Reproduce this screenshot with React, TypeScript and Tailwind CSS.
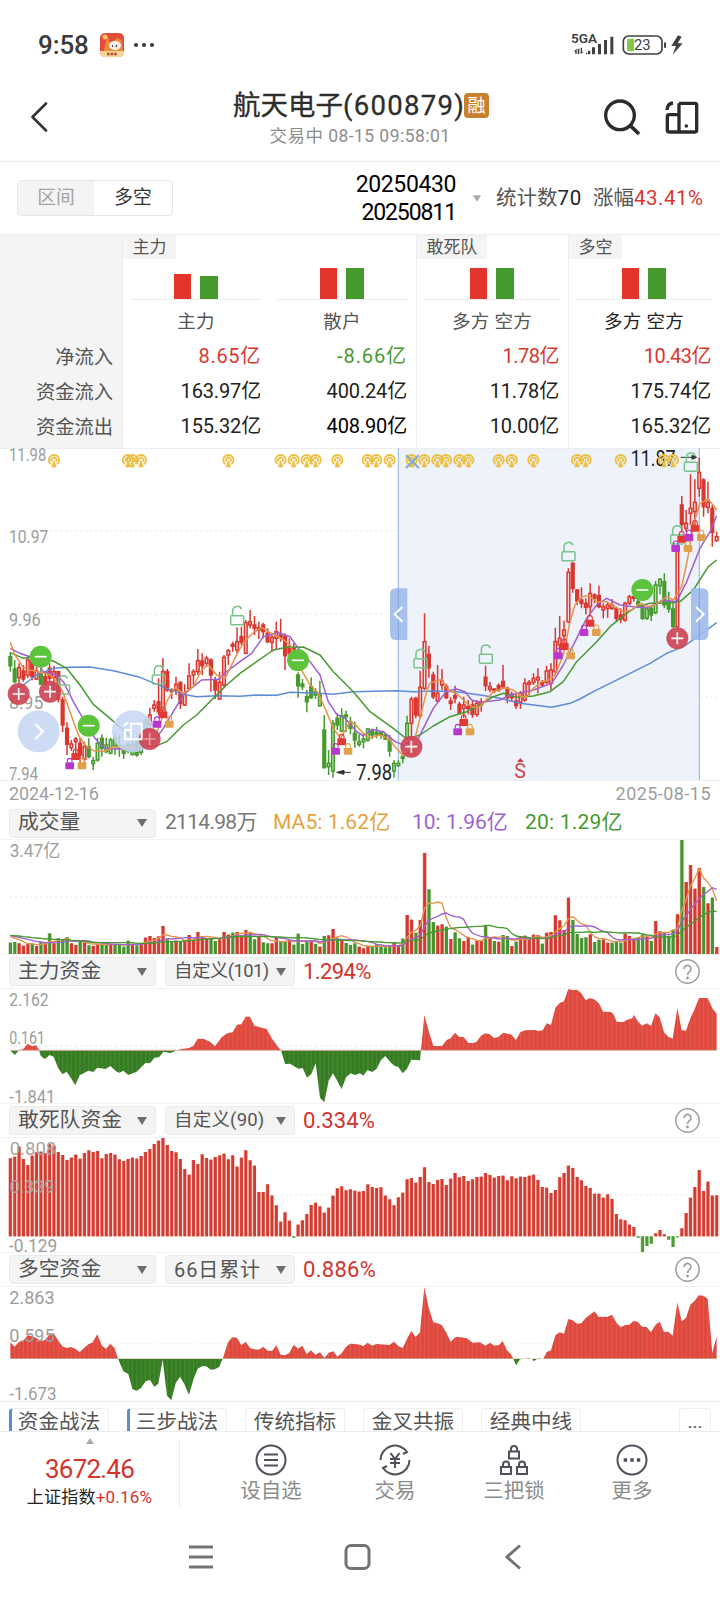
import type { ReactNode } from "react";

const RED = "#d9372f";
const GREEN = "#479a2f";
const ORANGE = "#e8924a";
const PURPLE = "#a05fd0";
const BLUE = "#5f8bd4";

// Chart space: 3 units per css pixel, one bar every 13.08 units.
const barX = (i: number) => 31 + 13.08 * i;

// [kind, high, bodyTop, bodyBottom, low] - upper case is a hollow body
const CANDLES = `g622,635,662,680 g645,672,710,715 R655,668,698,715 r660,678,702,710 R632,645,690,700 r635,645,695,706 R665,678,702,705 g668,685,718,720 r680,695,715,720 r655,670,700,710
R662,680,698,745 r678,680,762,772 r755,765,840,862 r832,850,898,930 R885,897,908,918 R876,882,890,935 r878,895,930,970 R890,905,942,958 g880,905,935,940 G935,947,956,975
G878,895,945,950 g868,880,910,935 G878,900,920,925 G878,885,925,928 G865,880,903,930 g870,900,910,935 g900,915,925,942 G890,900,918,925 G888,897,928,932 g885,895,930,935
G885,895,922,930 G822,828,895,900 R788,810,838,848 R765,780,790,800 r700,770,800,810 R640,680,795,810 r672,680,735,740 r730,735,740,762 R695,718,735,750 r710,712,775,792
R718,748,780,783 R655,693,730,735 R672,680,690,720 R612,647,680,690 r625,648,662,690 R632,640,655,665 r640,645,690,740 r695,705,735,762 R680,712,762,764 R630,637,720,730
R612,617,630,660 r590,598,604,620 R547,590,615,625 r545,575,592,600 R525,533,625,628 R495,530,540,550 r513,540,550,570 r530,548,555,582 r533,540,560,580 r550,565,590,595
R570,577,592,620 R530,560,580,612 r521,570,578,590 r565,575,632,675 r580,605,625,640 r595,610,640,660 g682,690,722,758 g702,717,725,735 g735,755,770,802 g697,725,758,762
g730,740,750,762 G708,750,782,785 g810,855,968,970 G915,955,965,990 G825,835,978,998 g805,820,840,855 G790,812,858,862 g797,810,815,862 g815,830,850,868 g830,865,885,908
G868,890,898,905 G865,882,890,910 G850,852,885,890 g852,858,870,882 g845,862,868,880 g858,862,870,882 g865,870,882,885 g870,885,918,935 G945,955,978,998 G945,955,962,965
g925,935,940,955 G812,835,880,885 R755,763,835,925 r755,760,810,820 R677,727,812,820 R505,590,730,735 r603,628,668,698 r680,690,755,762 R660,745,768,770 R672,708,720,735
r717,725,758,762 r757,768,775,795 r722,752,760,775 r770,778,805,808 R755,780,790,820 r765,785,790,808 r768,780,808,818 R765,775,808,815 R760,770,780,800 r662,697,722,738
R710,725,733,742 r730,732,738,745 r715,722,735,740 r660,710,725,730 r725,730,758,775 r740,748,758,770 r740,768,782,792 R738,745,772,792 R700,715,765,770 R705,712,718,750
R685,700,712,720 R670,697,705,745 r705,712,720,725 R662,678,712,718 R655,675,715,735 R548,590,680,685 R513,580,600,625 R527,555,572,600 R370,382,530,535 r352,355,430,443
r432,435,468,480 r427,465,475,490 r460,475,487,508 R415,445,485,510 r445,450,460,475 r422,452,485,490 R475,485,495,520 R470,480,490,518 R462,480,490,495 r485,490,520,530
r490,510,522,535 R470,475,525,530 R450,455,475,480 r450,455,460,470 g455,470,478,490 g475,485,520,525 G485,492,520,525 g480,490,510,528 G408,420,503,508 G400,403,422,448
g385,410,480,490 g440,470,492,503 g465,492,545,548 R300,310,545,550 r153,180,238,260 R195,235,250,260 R88,190,205,240 R103,172,200,240 R38,82,130,155 r100,105,185,215
R110,172,187,205 r180,190,262,305 R260,275,287,290`
  .split(/\s+/)
  .map((s) => ({ kind: s[0], v: s.slice(1).split(",").map(Number) }));

const VOLUMES = `428g 426g 430r 437r 432r 432g 438r 426g 430r 400g 430r 415g 420g 411g 430r 435r 425g 428r 436g 438r 433r 432g 432g 432r 435g 435g 440g 422g 433r 436g
432r 413r 408r 414r 409r 378r 418g 426g 422r 426g 420r 405r 420r 396r 410r 415r 415g 423g 418r 396r 404r 398g 396r 406r 390r 396g 418g 411r 427g 430g
430r 413r 423g 425g 421r 434g 401g 432g 425g 425r 432g 440r 408g 406r 387r 415g 420r 429g 435g 430g 440r 445r 438r 440g 433g 438g 442g 440g 427r 437r
416g 345r 359r 398g 360r 159r 268g 366g 377r 373r 380g 417r 397g 415g 423r 412r 434g 422r 422r 378g 412r 423g 425r 405g 408g 438r 425g 408r 407r 415r
404r 405r 431g 398r 396r 346r 361r 390r 293r 360g 402g 414g 412g 403r 426g 419g 418r 428r 428g 425g 428g 401r 408r 415r 412g 404g 408r 423g 363r 394r
397g 407g 389g 343r 120g 246r 195r 266r 204r 261g 310r 293g 441r`
  .split(/\s+/)
  .map((s) => ({ top: parseInt(s, 10), up: s.endsWith("r") }));

const DARE = [
  160, 155, 125, 162, 180, 152, 142, 140, 145, 118, 122, 141, 150, 165, 158, 149, 161, 144, 136, 141, 138, 160, 147, 144, 149, 163, 168,
  162, 158, 161, 153, 141, 132, 117, 107, 99, 120, 138, 142, 162, 192, 209, 165, 177, 148, 159, 164, 156, 151, 146, 163, 151, 185, 158,
  136, 166, 182, 261, 261, 238, 272, 301, 350, 322, 347, 398, 359, 346, 327, 300, 293, 304, 323, 308, 272, 250, 244, 256, 253, 257, 260,
  258, 238, 246, 249, 247, 272, 283, 301, 277, 263, 223, 219, 233, 216, 187, 231, 237, 225, 222, 240, 221, 204, 217, 213, 228, 223, 216,
  215, 204, 210, 218, 213, 212, 226, 214, 220, 215, 216, 212, 209, 225, 246, 248, 264, 255, 217, 204, 182, 189, 216, 226, 243, 249, 266,
  266, 278, 268, 282, 327, 343, 346, 359, 366, 398, 441, 423, 416, 385, 375, 388, 404, 426, 396, 370, 324, 278, 246, 195, 258, 230, 272,
  271,
];

const MAIN_FUND =
  "31,751 44,765 57,751 70,747 83,731 96,739 109,736 117,751 122,767 135,778 148,765 161,770 174,803 187,823 200,815 213,835 226,856 239,826 265,812 280,816 292,803 317,807 331,798 350,815 358,818 370,812 385,825 410,815 437,788 450,790 463,773 477,772 490,755 510,759 520,756 530,751 545,747 567,744 580,738 593,716 610,716 630,725 645,739 665,712 683,699 698,697 711,674 724,673 737,650 750,650 763,677 780,682 800,687 816,716 835,742 843,751 855,792 870,791 895,806 908,804 921,833 934,822 947,790 960,893 973,907 986,842 999,820 1012,843 1025,867 1038,832 1052,820 1065,825 1080,820 1090,827 1102,810 1117,816 1130,806 1143,780 1156,768 1170,785 1183,797 1195,801 1208,820 1221,806 1234,779 1260,781 1263,751 1273,645 1286,692 1300,738 1326,738 1340,720 1352,715 1365,698 1378,711 1391,711 1405,729 1420,729 1430,725 1443,707 1456,700 1469,703 1482,714 1495,711 1510,698 1535,704 1548,720 1561,697 1574,691 1605,690 1615,693 1628,691 1640,670 1653,675 1666,624 1679,609 1692,604 1705,567 1718,571 1731,569 1744,580 1757,601 1770,594 1785,599 1798,612 1809,635 1833,636 1840,642 1850,665 1870,666 1882,659 1897,655 1901,644 1913,663 1926,677 1940,670 1953,678 1966,640 1979,652 1992,697 2005,710 2018,716 2032,624 2045,690 2058,692 2071,655 2084,627 2097,594 2123,594 2137,625 2150,641";

const LONG_SHORT =
  "31,713 44,726 57,711 70,708 83,692 96,695 109,700 122,709 135,706 148,690 161,686 174,707 187,725 200,730 213,727 226,732 239,743 252,730 265,719 278,713 292,689 305,722 318,733 331,717 344,731 354,762 370,800 385,808 397,853 410,858 423,850 437,830 450,826 463,846 475,837 488,765 501,873 514,887 527,836 540,816 553,838 567,870 580,825 593,792 606,785 619,785 632,795 645,794 658,786 668,762 684,713 697,698 711,699 724,722 737,711 750,730 763,734 776,735 790,726 803,738 816,739 829,722 842,750 855,752 868,745 881,720 894,732 907,723 920,748 933,737 946,750 960,743 973,760 986,744 1000,740 1012,756 1025,746 1038,726 1051,717 1064,718 1080,720 1090,725 1103,714 1116,723 1129,718 1168,721 1182,711 1195,724 1208,730 1221,702 1234,679 1247,697 1260,683 1273,547 1286,609 1300,653 1313,656 1326,662 1339,684 1352,711 1365,698 1378,697 1400,701 1418,714 1440,713 1456,723 1470,714 1483,723 1497,721 1508,709 1521,737 1534,750 1540,762 1548,782 1560,764 1575,762 1585,760 1597,763 1600,770 1610,764 1615,760 1630,763 1640,742 1653,737 1666,692 1679,683 1692,687 1705,643 1718,647 1731,657 1744,656 1757,640 1770,630 1784,620 1796,637 1823,636 1836,630 1850,655 1862,668 1875,661 1888,660 1900,649 1913,651 1926,666 1940,667 1953,683 1966,661 1979,651 1992,682 2005,681 2018,693 2032,593 2045,650 2058,640 2071,600 2084,588 2097,572 2110,573 2123,582 2137,745 2150,695";

const MA_LINES = [
  [BLUE, "31,742 70,720 110,690 160,670 210,667 270,666 340,677 420,697 500,730 550,748 590,755 650,752 720,754 770,750 830,751 870,742 960,745 1000,748 1060,740 1190,737 1240,740 1300,738 1370,740 1440,750 1500,760 1560,775 1655,787 1710,775 1740,762 1780,740 1860,700 1950,655 2000,625 2050,605 2100,570 2150,533"],
  [GREEN, "31,623 70,640 100,636 160,648 200,670 240,720 280,778 330,820 370,855 410,890 440,903 470,902 500,890 550,840 590,810 640,760 680,720 720,685 770,650 820,615 860,607 910,606 960,630 1000,680 1060,740 1110,800 1180,850 1220,882 1260,870 1300,843 1350,815 1400,800 1440,780 1480,755 1510,745 1550,757 1600,753 1650,740 1690,710 1730,650 1790,590 1830,545 1880,505 1910,485 1950,475 2000,475 2040,470 2080,435 2125,365 2150,345"],
  [PURPLE, "31,610 60,625 90,635 110,650 130,680 170,690 190,710 220,770 260,840 285,880 310,908 340,912 400,912 430,910 465,885 490,850 520,800 550,750 580,725 605,705 655,703 680,680 720,650 755,625 790,575 835,563 870,575 895,610 930,650 960,690 985,770 1010,808 1035,820 1070,860 1090,873 1115,853 1150,860 1185,890 1210,900 1255,880 1270,850 1300,790 1340,738 1370,732 1395,740 1415,765 1440,772 1500,765 1530,750 1570,742 1600,735 1655,715 1690,660 1730,580 1760,520 1790,480 1820,460 1860,480 1900,485 1945,488 1990,465 2030,470 2060,410 2100,310 2130,260 2150,212"],
  [ORANGE, "31,592 45,630 70,668 90,675 115,680 150,690 175,715 190,745 210,800 235,870 255,900 280,917 315,919 340,905 380,908 410,910 435,900 460,885 480,840 500,770 525,728 550,745 580,725 605,675 625,660 650,690 675,700 700,650 720,610 740,583 760,563 785,547 805,560 830,572 855,588 870,600 885,630 910,685 930,720 955,745 975,790 1000,850 1022,880 1050,830 1065,838 1090,865 1110,878 1140,870 1165,880 1185,905 1210,932 1225,925 1245,880 1262,810 1280,740 1290,715 1325,703 1345,735 1370,745 1400,775 1420,787 1440,785 1480,740 1515,728 1540,735 1565,755 1580,755 1600,730 1625,710 1645,705 1665,690 1690,630 1710,530 1725,480 1745,455 1765,452 1790,470 1820,470 1845,485 1870,500 1895,495 1920,475 1945,485 1965,480 2000,455 2020,465 2045,425 2065,330 2080,240 2100,175 2125,162 2150,195"],
];

const PINS = [162, 384, 397, 423, 685, 842, 881, 920, 947, 1012, 1103, 1129, 1169, 1235, 1273, 1312, 1338, 1378, 1405, 1496, 1535, 1600, 1731, 1757, 1862, 1992, 2019];
const OPEN_LOCKS = [[189, 690], [476, 660], [711, 482], [1261, 611], [1457, 598], [1705, 290], [2031, 240], [2072, 22]];
const LOCK_TRIOS = [[227, 928], [489, 803], [1025, 884], [1391, 826], [1693, 598], [1770, 528], [2045, 276], [2085, 243]];
const SELLS = [[122, 635], [266, 842], [894, 646], [1927, 435]];
const BUYS = [[56, 747], [150, 740], [449, 882], [1234, 905], [2032, 580]];

function movingAverage(period: number) {
  const tops = [...Array(period - 1).fill(405), ...VOLUMES.map((v) => v.top)];
  return VOLUMES.map((_, i) => {
    const sum = tops.slice(i, i + period).reduce((a: number, b: number) => a + b, 0);
    return `${barX(i).toFixed(0)},${(sum / period).toFixed(0)}`;
  }).join(" ");
}

function AxisLabel({ x = 27, y, w, size = 53, fill = "#9d9d9d", children }: { x?: number; y: number; w: number; size?: number; fill?: string; children: ReactNode }) {
  return (
    <text x={x} y={y} fontSize={size} textLength={w} lengthAdjust="spacingAndGlyphs" fill={fill}>
      {children}
    </text>
  );
}

function GridLine({ y }: { y: number }) {
  return <line x1="30" x2="2150" y1={y} y2={y} stroke="#f0f0f0" strokeWidth="4" strokeDasharray="7 8" />;
}

function SmallLock({ x, y, color }: { x: number; y: number; color: string }) {
  return (
    <g>
      <rect x={x - 13} y={y - 4} width="26" height="21" rx="3" fill={color} />
      <path d={`M${x - 7} ${y - 4}v-5a7 7 0 0 1 14 0v5`} fill="none" stroke={color} strokeWidth="3.5" />
    </g>
  );
}

function PriceChart() {
  return (
    <svg viewBox="0 9 2160 999" className="block h-[333px] w-[720px] overflow-visible">
      <rect x="1195" y="10" width="903" height="996" fill="#edf2fb" />
      <GridLine y={258} />
      <GridLine y={507} />
      <GridLine y={756} />
      <path d="M0 10.5H2160M0 1006H2160" stroke="#ededed" strokeWidth="3" />
      <path d="M1195 10V1006M2098 10V1006" stroke="#9fbde3" strokeWidth="3.5" />
      <AxisLabel y={47} w={112}>11.98</AxisLabel>
      <AxisLabel y={295} w={118}>10.97</AxisLabel>
      <AxisLabel y={544} w={95}>9.96</AxisLabel>
      <AxisLabel y={793} w={103}>8.95</AxisLabel>
      <AxisLabel y={1006} w={87}>7.94</AxisLabel>
      <AxisLabel x={1892} y={62} w={135} size={66} fill="#222">11.87</AxisLabel>
      <path d="M2042 37h34m0-6l14 6l-14 6z" stroke="#333" strokeWidth="3" fill="#333" />
      {PINS.map((x) => (
        <g key={x} fill="none" stroke="#ecbf45" strokeWidth="5.5">
          <path d={`M${x - 9} 58a15.500 15.500 0 1 1 18 0`} />
          <path d={`M${x - 6} 50a7.500 7.500 0 1 1 12 0`} />
          <path d={`M${x} 46l7 20h-14z`} fill="#ecbf45" strokeWidth="2" />
        </g>
      ))}
      <path d="M1218 31l38 38M1256 31l-38 38" stroke="#88a9c9" strokeWidth="6.5" />
      {CANDLES.map(({ kind, v }, i) => {
        const up = kind.toLowerCase() === "r";
        const hollow = kind === "R" || kind === "G";
        const color = up ? RED : GREEN;
        const x = barX(i);
        return (
          <g key={i} stroke={color} strokeWidth="4.5">
            <path d={`M${x} ${v[0]}V${v[1]}M${x} ${v[2]}V${v[3]}`} />
            <rect x={x - 4} y={v[1]} width="8" height={Math.max(v[2] - v[1], 3)} fill={hollow ? (up ? "#fbd9d9" : "#b9e0ab") : color} />
          </g>
        );
      })}
      {MA_LINES.map(([color, points]) => (
        <polyline key={color} points={points} fill="none" stroke={color} strokeWidth="4.5" strokeLinejoin="round" />
      ))}
      {OPEN_LOCKS.map(([x, y]) => (
        <g key={x} fill="none" stroke="#78c38a" strokeWidth="4.5">
          <rect x={x - 19} y={y + 30} width="39" height="27" rx="3" />
          <path d={`M${x - 13} ${y + 30}v-15a14 14 0 0 1 27 -4`} />
        </g>
      ))}
      {SELLS.map(([x, y]) => (
        <g key={x}>
          <circle cx={x} cy={y} r="33" fill="#5bc43c" />
          <path d={`M${x - 18} ${y}h36`} stroke="#fff" strokeWidth="5" />
        </g>
      ))}
      <circle cx="399" cy="859" r="63" fill="#c6d6f3" fillOpacity="0.85" />
      {BUYS.map(([x, y]) => (
        <g key={x}>
          <circle cx={x} cy={y} r="33" fill="#cf4655" fillOpacity="0.93" />
          <path d={`M${x - 18} ${y}h36M${x} ${y - 18}v36`} stroke="#fff" strokeWidth="5" strokeOpacity={x === 449 ? 0.45 : 1} />
        </g>
      ))}
      {LOCK_TRIOS.map(([x, y]) => (
        <g key={x}>
          <SmallLock x={x} y={y} color="#e23a32" />
          <SmallLock x={x - 18} y={y + 28} color="#bb36cf" />
          <SmallLock x={x + 19} y={y + 28} color="#e2a24a" />
        </g>
      ))}
      <path d="M1032 982h20m-20-6l-22 6l22 6z" stroke="#333" strokeWidth="3" fill="#333" />
      <AxisLabel x={1069} y={1004} w={107} size={64} fill="#222">7.98</AxisLabel>
      <path d="M1551 951h20l-10-12z" fill="#c93b3b" />
      <AxisLabel x={1543} y={999} w={35} size={62} fill="#d04545">S</AxisLabel>
      <circle cx="116" cy="859" r="63" fill="#c6d6f3" fillOpacity="0.88" />
      <path d="M106 837l22 22l-22 24" fill="none" stroke="#fff" strokeWidth="7" />
      <path d="M393 836h32v47h-50v-28h18zM393 836v47M374 844q0-9 11-10" fill="none" stroke="#fff" strokeWidth="6" />
      <path d="M1222 430h-34q-18 0-18 18v119q0 18 18 18h34z" fill="#9fbbed" fillOpacity="0.9" />
      <path d="M2073 430h34q18 0 18 18v119q0 18-18 18h-34z" fill="#9fbbed" fillOpacity="0.9" />
      <path d="M1195 430v155M2098 430v155" stroke="#7f9fd6" strokeOpacity="0.8" strokeWidth="3" />
      <path d="M1207 486l-23 22l23 22M2088 486l23 22l-23 22" fill="none" stroke="#fff" strokeWidth="6" />
    </svg>
  );
}

function VolumeChart() {
  return (
    <svg viewBox="0 120 2160 342" className="block h-[114px] w-[720px]">
      <GridLine y={291} />
      <AxisLabel x={29} y={172} w={152}>3.47亿</AxisLabel>
      {VOLUMES.map((v, i) => (
        <g key={i}>
          <rect x={barX(i) - 6} y={v.top} width="11" height={462 - v.top} fill={v.up ? "#f3b0aa" : "#b4d8a6"} />
          <rect x={barX(i) - 4} y={v.top} width="9" height={462 - v.top} fill={v.up ? "#d2392f" : "#479330"} />
        </g>
      ))}
      <polyline points={movingAverage(5)} fill="none" stroke={ORANGE} strokeWidth="4" />
      <polyline points={movingAverage(10)} fill="none" stroke={PURPLE} strokeWidth="4" />
      <polyline points={movingAverage(20)} fill="none" stroke={GREEN} strokeWidth="4" />
    </svg>
  );
}

function DareChart() {
  return (
    <svg viewBox="0 99 2160 342" className="block h-[114px] w-[720px] overflow-visible">
      <GridLine y={270} />
      {DARE.map((y, i) => {
        const up = y < 394;
        const top = Math.min(y, 394);
        const h = Math.max(Math.abs(394 - y), 3);
        return (
          <g key={i}>
            <rect x={barX(i) - 6} y={top} width="11" height={h} fill={up ? "#f6a9a3" : "#b4d8a6"} />
            <rect x={barX(i) - 4} y={top} width="8.500" height={h} fill={up ? "#d23c31" : "#4d9a36"} />
          </g>
        );
      })}
      <AxisLabel x={29} y={151} w={140} fill="#aba3a1">0.808</AxisLabel>
      <AxisLabel x={29} y={264} w={134} fill="#aba3a1">0.339</AxisLabel>
      <AxisLabel x={27} y={440} w={145}>-0.129</AxisLabel>
    </svg>
  );
}

function AreaChart({ id, top, base, mid, points, labels }: { id: string; top: number; base: number; mid: number; points: string; labels: [string, number, number][] }) {
  const shape = `31,${base} ${points} 2150,${base}`;
  return (
    <svg viewBox={`0 ${top} 2160 342`} className="block h-[114px] w-[720px] overflow-visible">
      <defs>
        <clipPath id={`${id}-pos`}>
          <rect x="0" y={top} width="2160" height={base - top} />
        </clipPath>
        <clipPath id={`${id}-neg`}>
          <rect x="0" y={base} width="2160" height={342 - base + top} />
        </clipPath>
        <clipPath id={`${id}-all`}>
          <polygon points={shape} />
        </clipPath>
      </defs>
      <GridLine y={mid} />
      <polygon points={shape} fill="#e04a3e" clipPath={`url(#${id}-pos)`} />
      <polygon points={shape} fill="#367d22" clipPath={`url(#${id}-neg)`} />
      <g clipPath={`url(#${id}-all)`} stroke="#fff" strokeOpacity="0.16" strokeWidth="2">
        {DARE.map((_, i) => (
          <line key={i} x1={barX(i)} x2={barX(i)} y1={top} y2={top + 342} />
        ))}
      </g>
      {id === "main" && <line x1="31" x2="2150" y1={base} y2={base} stroke="#e9a39c" strokeWidth="2.500" />}
      {labels.map(([text, y, w]) => (
        <AxisLabel key={text} x={28} y={y} w={w}>{text}</AxisLabel>
      ))}
    </svg>
  );
}

function Caret() {
  return (
    <svg viewBox="0 0 10 8" className="h-2 w-2.5 shrink-0">
      <path d="M0 0h10L5 8z" fill="#6d6d6d" />
    </svg>
  );
}

function Chip({ label }: { label: string }) {
  return (
    <div className="flex h-[29px] w-[147px] items-center justify-between rounded border border-[#ebebeb] bg-[#f4f4f4] pr-2 pl-[8px] text-[20.800px] text-[#555]">
      <span className="whitespace-nowrap">{label}</span>
      <Caret />
    </div>
  );
}

function IndicatorHeader({ name, option, optionClass, value, valueClass }: { name: string; option: string; optionClass: string; value: string; valueClass: string }) {
  return (
    <div className="flex h-[35px] items-center border-t border-b border-[#f3f3f3] pr-[20px] pl-[9px]">
      <Chip label={name} />
      <div className="ml-[9px] flex h-[29px] w-[130px] items-center justify-between rounded border border-[#ebebeb] bg-[#f4f4f4] pr-2 pl-[8px] text-[#555]">
        <span className={`whitespace-nowrap ${optionClass}`}>{option}</span>
        <Caret />
      </div>
      <span className={`ml-[8px] text-[#d0342c] ${valueClass}`}>{value}</span>
      <svg viewBox="0 0 24 24" className="ml-auto h-[25px] w-[25px]" fill="none" stroke="#9d9d9d" strokeWidth="1.400">
        <circle cx="12" cy="12" r="11.200" />
        <path d="M8.700 9.500a3.300 3.300 0 1 1 5.300 2.600c-1.300 1-2 1.500-2 3.200" strokeWidth="1.600" />
        <circle cx="12" cy="18.300" r="0.700" fill="#9d9d9d" />
      </svg>
    </div>
  );
}

const FLOW_LABELS = ["净流入", "资金流入", "资金流出"];

function FlowColumn({ name, heights, values, tone, dark, strong, className }: { name: string; heights: number[]; values: string[]; tone: string; dark?: boolean; strong?: boolean; className: string }) {
  return (
    <div className={`flex flex-col ${className}`}>
      <div className="flex h-[26px] items-end justify-center gap-[9px] border-b border-[#ebebeb] pr-[1px]">
        <span className="w-[17.500px] bg-[#e3352b]" style={{ height: heights[0] }} />
        <span className="w-[17.500px] bg-[#469a2d]" style={{ height: heights[1] }} />
      </div>
      <div className={`mt-[10px] flex h-[26px] items-center justify-center text-[18.500px] ${dark ? "text-[#222]" : "text-[#555]"}`}>
        <span className="tracking-[0.300px] whitespace-pre">{name}</span>
      </div>
      <div className="mt-[3px] text-right text-[20px] leading-[35px] tracking-[-0.150px]">
        <div className={tone}>{values[0]}</div>
        <div className="text-[#222]">{values[1]}</div>
        <div className={strong ? "text-black" : "text-[#222]"}>{values[2]}</div>
      </div>
    </div>
  );
}

function GroupTag({ children }: { children: ReactNode }) {
  return <div className="flex h-6 w-fit items-center bg-[#f4f4f4] px-[9.500px] text-[17px] leading-none text-[#555]">{children}</div>;
}

function FundTable() {
  return (
    <section className="flex h-[214px] border-t border-[#ededed]">
      <div className="flex w-[123px] flex-col items-end border-r border-[#ededed] bg-[#f4f4f4] pt-[105px] pr-[9px] text-[19.300px] leading-[35px] text-[#555]">
        {FLOW_LABELS.map((l) => (
          <div key={l}>{l}</div>
        ))}
      </div>
      <div className="w-[294px] border-r border-[#ededed]">
        <GroupTag>主力</GroupTag>
        <div className="mt-[15px] flex gap-[16px] pl-[8px]">
          <FlowColumn className="w-[130px]" name="主力" heights={[25, 23.5]} values={["8.65亿", "163.97亿", "155.32亿"]} tone="text-[#d9372f] tracking-[0.700px]" />
          <FlowColumn className="w-[130px]" name="散户" heights={[31, 31]} values={["-8.66亿", "400.24亿", "408.90亿"]} tone="text-[#479a2f] tracking-[0.900px]" strong />
        </div>
      </div>
      <div className="w-[152px] border-r border-[#ededed]">
        <GroupTag>敢死队</GroupTag>
        <FlowColumn className="mt-[15px] ml-[8px] w-[134px]" name="多方 空方" heights={[31, 31]} values={["1.78亿", "11.78亿", "10.00亿"]} tone="text-[#d9372f] tracking-[-0.500px]" />
      </div>
      <div className="flex-1">
        <GroupTag>多空</GroupTag>
        <FlowColumn className="mt-[15px] ml-[8px] w-[134px]" name="多方 空方" heights={[31, 31]} values={["10.43亿", "175.74亿", "165.32亿"]} tone="text-[#d9372f] tracking-[-0.500px]" dark />
      </div>
    </section>
  );
}

function StatusBar() {
  return (
    <div className="flex h-[90px] items-center pl-[38px] text-[#3b3b3b]">
      <span className="w-[62px] text-[26px] font-medium tracking-[-0.100px]">9:58</span>
      <svg viewBox="0 0 24 24" className="h-6 w-6">
        <rect width="24" height="24" rx="5" fill="#e34b3a" />
        <path d="M0 18h24v1a5 5 0 0 1-5 5H5a5 5 0 0 1-5-5z" fill="#f6d398" />
        <path d="M4 18l2-10 2-4 2 6 8-5 4 3 1 10z" fill="#f08a3c" />
        <circle cx="5" cy="4" r="2.500" fill="#f7c46a" />
        <ellipse cx="15" cy="12.500" rx="6" ry="4.500" fill="#fbf1ea" />
        <path d="M12.500 12v2M17 12l-1 1 1 1" stroke="#444" strokeWidth="1.100" fill="none" />
        <path d="M7 21h10" stroke="#b3522a" strokeWidth="2.400" strokeDasharray="2.600 1" />
      </svg>
      <svg viewBox="0 0 22 6" className="ml-[9px] h-1.5 w-[22px]" fill="#3b3b3b">
        <circle cx="3" cy="3" r="2.100" />
        <circle cx="11" cy="3" r="2.100" />
        <circle cx="19" cy="3" r="2.100" />
      </svg>
      <svg viewBox="0 20 450 80" className="ml-auto h-[26.700px] w-[150px] overflow-visible" fill="#404040">
        <text x="33" y="54" fontSize="40" fontWeight="600" textLength="78" lengthAdjust="spacingAndGlyphs">5GA</text>
        <path d="M42 78l8-8v16h-4v-6zM53 70h5v16h-5zM62 67h4v12h5l-9 8z" />
        <path d="M78 83h4v4h-4zM84 76h7v11h-7zM96 66h9v21h-9zM114 56h9v31h-9zM132 44h9v43h-9zM151 34h9v53h-9z" />
        <rect x="190" y="32" width="116" height="54" rx="16" fill="none" stroke="#404040" strokeWidth="5" />
        <path d="M208 40h14v38h-14q-7 0-7-7V47q0-7 7-7z" fill="#82c845" />
        <rect x="312" y="51" width="6" height="17" rx="3" />
        <text x="222" y="75" fontSize="46" textLength="50" lengthAdjust="spacingAndGlyphs">23</text>
        <path d="M354 30l-20 32h14l-10 26l30-34h-15l12-20z" />
      </svg>
      <div className="w-[10px]" />
    </div>
  );
}

function Header() {
  return (
    <header className="flex h-[72px] items-start border-b border-[#ededed] pt-[1px]">
      <svg viewBox="0 0 18 30" className="mt-[11px] ml-[30px] h-[30px] w-[18px]" fill="none" stroke="#333" strokeWidth="2.600">
        <path d="M16 1.500L2.500 15L16 28.500" strokeLinecap="round" strokeLinejoin="round" />
      </svg>
      <div className="ml-[170px] w-[284px]">
        <div className="flex h-[29px] items-center pl-[15px] text-[27.500px] whitespace-nowrap text-[#2d2d2d] [-webkit-text-stroke:0.3px_#2d2d2d]">
          <span className="w-[231px]">
            航天电子<span className="tracking-[1.300px]">(600879)</span>
          </span>
          <span className="flex h-[25px] w-[25px] shrink-0 items-center justify-center rounded bg-[#c9812f] text-[18px] text-white [-webkit-text-stroke:0]">融</span>
        </div>
        <div className="mt-[4px] h-6 text-center text-[17.500px] leading-6 tracking-[0.450px] whitespace-nowrap text-[#8d8d8d]">交易中 08-15 09:58:01</div>
      </div>
      <svg viewBox="0 0 330 120" className="mt-[7px] ml-[101px] h-[40px] w-[110px]" fill="none" stroke="#2b2b2b">
        <circle cx="51" cy="52" r="43" strokeWidth="10" />
        <path d="M82 83l26 25" strokeWidth="11" />
        <path d="M228 16h48q5 0 5 5v76q0 5-5 5h-78q-5 0-5-5v-41q0-6 6-6h29M228 16v86M192 36q1-19 18-21" strokeWidth="10" />
        <circle cx="250" cy="84" r="5.500" fill="#2b2b2b" stroke="none" />
      </svg>
    </header>
  );
}

function RangeBar() {
  return (
    <div className="flex h-[72px] items-center pl-[17px] whitespace-nowrap">
      <div className="flex h-9 w-[156px] overflow-hidden rounded border-[1.500px] border-[#e6e6e6] text-[18.800px]">
        <span className="flex w-[76px] items-center justify-center bg-[#f4f4f4] pt-px text-[#a3a3a3]">区间</span>
        <span className="flex flex-1 items-center justify-center pt-px text-[#333]">多空</span>
      </div>
      <div className="ml-[163px] w-[120px] pt-px text-right text-[23px] leading-[28px] tracking-[-0.400px] text-black">
        <div>20250430</div>
        <div className="tracking-[-1.100px]">20250811</div>
      </div>
      <svg viewBox="0 0 10 8" className="ml-[17px] h-[7px] w-[8px]">
        <path d="M0 0h10L5 8z" fill="#aaa" />
      </svg>
      <div className="ml-[15px] w-[97px] text-[20.500px] text-[#555]">
        统计数<span className="tracking-[0.800px] text-[#222]">70</span>
      </div>
      <div className="text-[20.500px] text-[#555]">
        涨幅<span className="tracking-[0.500px] text-[#d9372f]">43.41%</span>
      </div>
    </div>
  );
}

function TabStrip() {
  const tabs = [
    ["资金战法", true],
    ["三步战法", true],
    ["传统指标", false],
    ["金叉共振", false],
    ["经典中线", false],
  ] as const;
  return (
    <div className="flex h-[31px] items-start gap-[18px] border-t border-b border-[#ececec] pt-[6px] pr-[9px] pl-[9px]">
      {tabs.map(([name, active]) => (
        <div key={name} className={`flex h-[23px] w-[100px] shrink-0 items-start justify-center rounded-t border border-b-0 pt-[3px] text-[20.600px] leading-[21px] whitespace-nowrap text-[#555] ${active ? "border-[#efefef] border-l-[3px] border-l-[#5f8bd4] pr-[2px]" : "border-[#efefef]"}`}>
          {name}
        </div>
      ))}
      <div className="ml-auto flex h-[23px] w-[32px] items-start justify-center rounded-t border border-b-0 border-[#efefef] text-[19px] leading-[26px] text-[#555]">...</div>
    </div>
  );
}

function Action({ label, children, className }: { label: string; children: ReactNode; className: string }) {
  return (
    <div className={`flex flex-col items-center ${className}`}>
      <svg viewBox="-16 -16 32 32" className="h-8 w-8" fill="none" stroke="#50505a" strokeWidth="2">
        {children}
      </svg>
      <span className="mt-[1px] text-[20.500px] leading-[28px] whitespace-nowrap text-[#8c8c8c]">{label}</span>
    </div>
  );
}

function OutlineLock({ x, y }: { x: number; y: number }) {
  return <path d={`M${x - 5} ${y}h10v7h-10zM${x - 3} ${y}v-2.500a3 3 0 0 1 6 0v2.500`} />;
}

function BottomBar() {
  return (
    <nav className="flex h-[82px]">
      <div className="flex w-[179px] flex-col items-center">
        <svg viewBox="0 0 8 6" className="mt-[6px] h-1.5 w-2">
          <path d="M0 6h8L4 0z" fill="#aaa" />
        </svg>
        <div className="mt-[10px] h-[30px] text-[26px] leading-[30px] tracking-[-0.800px] text-[#d0342c]">3672.46</div>
        <div className="mt-[2px] text-[17px] leading-[22px] tracking-[0.200px] whitespace-nowrap text-[#222]">
          上证指数<span className="text-[#d0342c]">+0.16%</span>
        </div>
      </div>
      <div className="mt-[8px] h-[68px] w-px bg-[#ededed]" />
      <div className="flex pt-[12px]">
        <Action label="设自选" className="ml-[41px] w-[100px]">
          <circle r="14.500" />
          <path d="M-7 -5.500H7M-7 0H7M-7 5.500H7" />
        </Action>
        <Action label="交易" className="ml-[24px] w-[100px]">
          <path d="M-14.500 0A14.500 14.500 0 0 1 12 -8l-4 2M14.500 0A14.500 14.500 0 0 1 -12 8l4 -2" />
          <path d="M-4.500 -7L0 -1L4.500 -7M0 -1V8M-5 -1H5M-5 3H5" />
        </Action>
        <Action label="三把锁" className="ml-[19px] w-[100px]">
          <OutlineLock x={0} y={-8.5} />
          <OutlineLock x={-8} y={7} />
          <OutlineLock x={8} y={7} />
        </Action>
        <Action label="更多" className="ml-[18px] w-[100px]">
          <circle r="14.500" />
          <path d="M-8.300 0h3.500M-1.700 0h3.500M4.800 0h3.500" strokeWidth="3.500" />
        </Action>
      </div>
    </nav>
  );
}

function SystemNav() {
  return (
    <div className="flex h-[87px] items-start justify-center pt-[29px]">
      <svg viewBox="0 0 340 28" className="ml-[-11px] h-7 w-[340px]" fill="none" stroke="#737373" strokeWidth="3">
        <path d="M4 4h24M4 14h24M4 24h24" />
        <rect x="161" y="2.500" width="23" height="23" rx="5" />
        <path d="M335 2.500L322 14L335 25.500" />
      </svg>
    </div>
  );
}

export default function App() {
  return (
    <main className="h-[1600px] w-[720px] overflow-hidden bg-white font-[Roboto,'Noto_Sans_CJK_SC',sans-serif]">
      <StatusBar />
      <Header />
      <RangeBar />
      <FundTable />
      <PriceChart />
      <div className="flex h-[25px] items-center justify-between pr-[9px] pb-px pl-[9px] text-[18px] tracking-[-0.100px] text-[#9d9d9d]">
        <span>2024-12-16</span>
        <span className="tracking-[0.450px]">2025-08-15</span>
      </div>
      <div className="flex h-[34px] items-center border-b border-[#f3f3f3] pt-px pl-[9px] text-[21px] whitespace-nowrap">
        <Chip label="成交量" />
        <span className="ml-[9px] w-[108px] tracking-[-0.700px] text-[#777]">2114.98万</span>
        <span className="w-[139px] tracking-[0.100px] text-[#e5a23c]">MA5: 1.62亿</span>
        <span className="w-[113px] text-[#a05fd0]">10: 1.96亿</span>
        <span className="tracking-[0.200px] text-[#479a2f]">20: 1.29亿</span>
      </div>
      <VolumeChart />
      <IndicatorHeader name="主力资金" option="自定义(101)" optionClass="text-[18.500px] tracking-[-0.600px]" value="1.294%" valueClass="text-[22px] tracking-[-0.600px]" />
      <AreaChart id="main" top={567} base={751} mid={738} points={MAIN_FUND} labels={[["2.162", 619, 118], ["0.161", 731, 107], ["-1.841", 908, 138]]} />
      <IndicatorHeader name="敢死队资金" option="自定义(90)" optionClass="text-[18.500px] tracking-[0.200px]" value="0.334%" valueClass="text-[22px] tracking-[0.100px]" />
      <DareChart />
      <IndicatorHeader name="多空资金" option="66日累计" optionClass="text-[20px] tracking-[0.900px]" value="0.886%" valueClass="text-[22px] tracking-[0.300px]" />
      <AreaChart id="both" top={547} base={762} mid={717} points={LONG_SHORT} labels={[["2.863", 599, 136], ["0.595", 711, 136], ["-1.673", 886, 142]]} />
      <TabStrip />
      <BottomBar />
      <SystemNav />
    </main>
  );
}
